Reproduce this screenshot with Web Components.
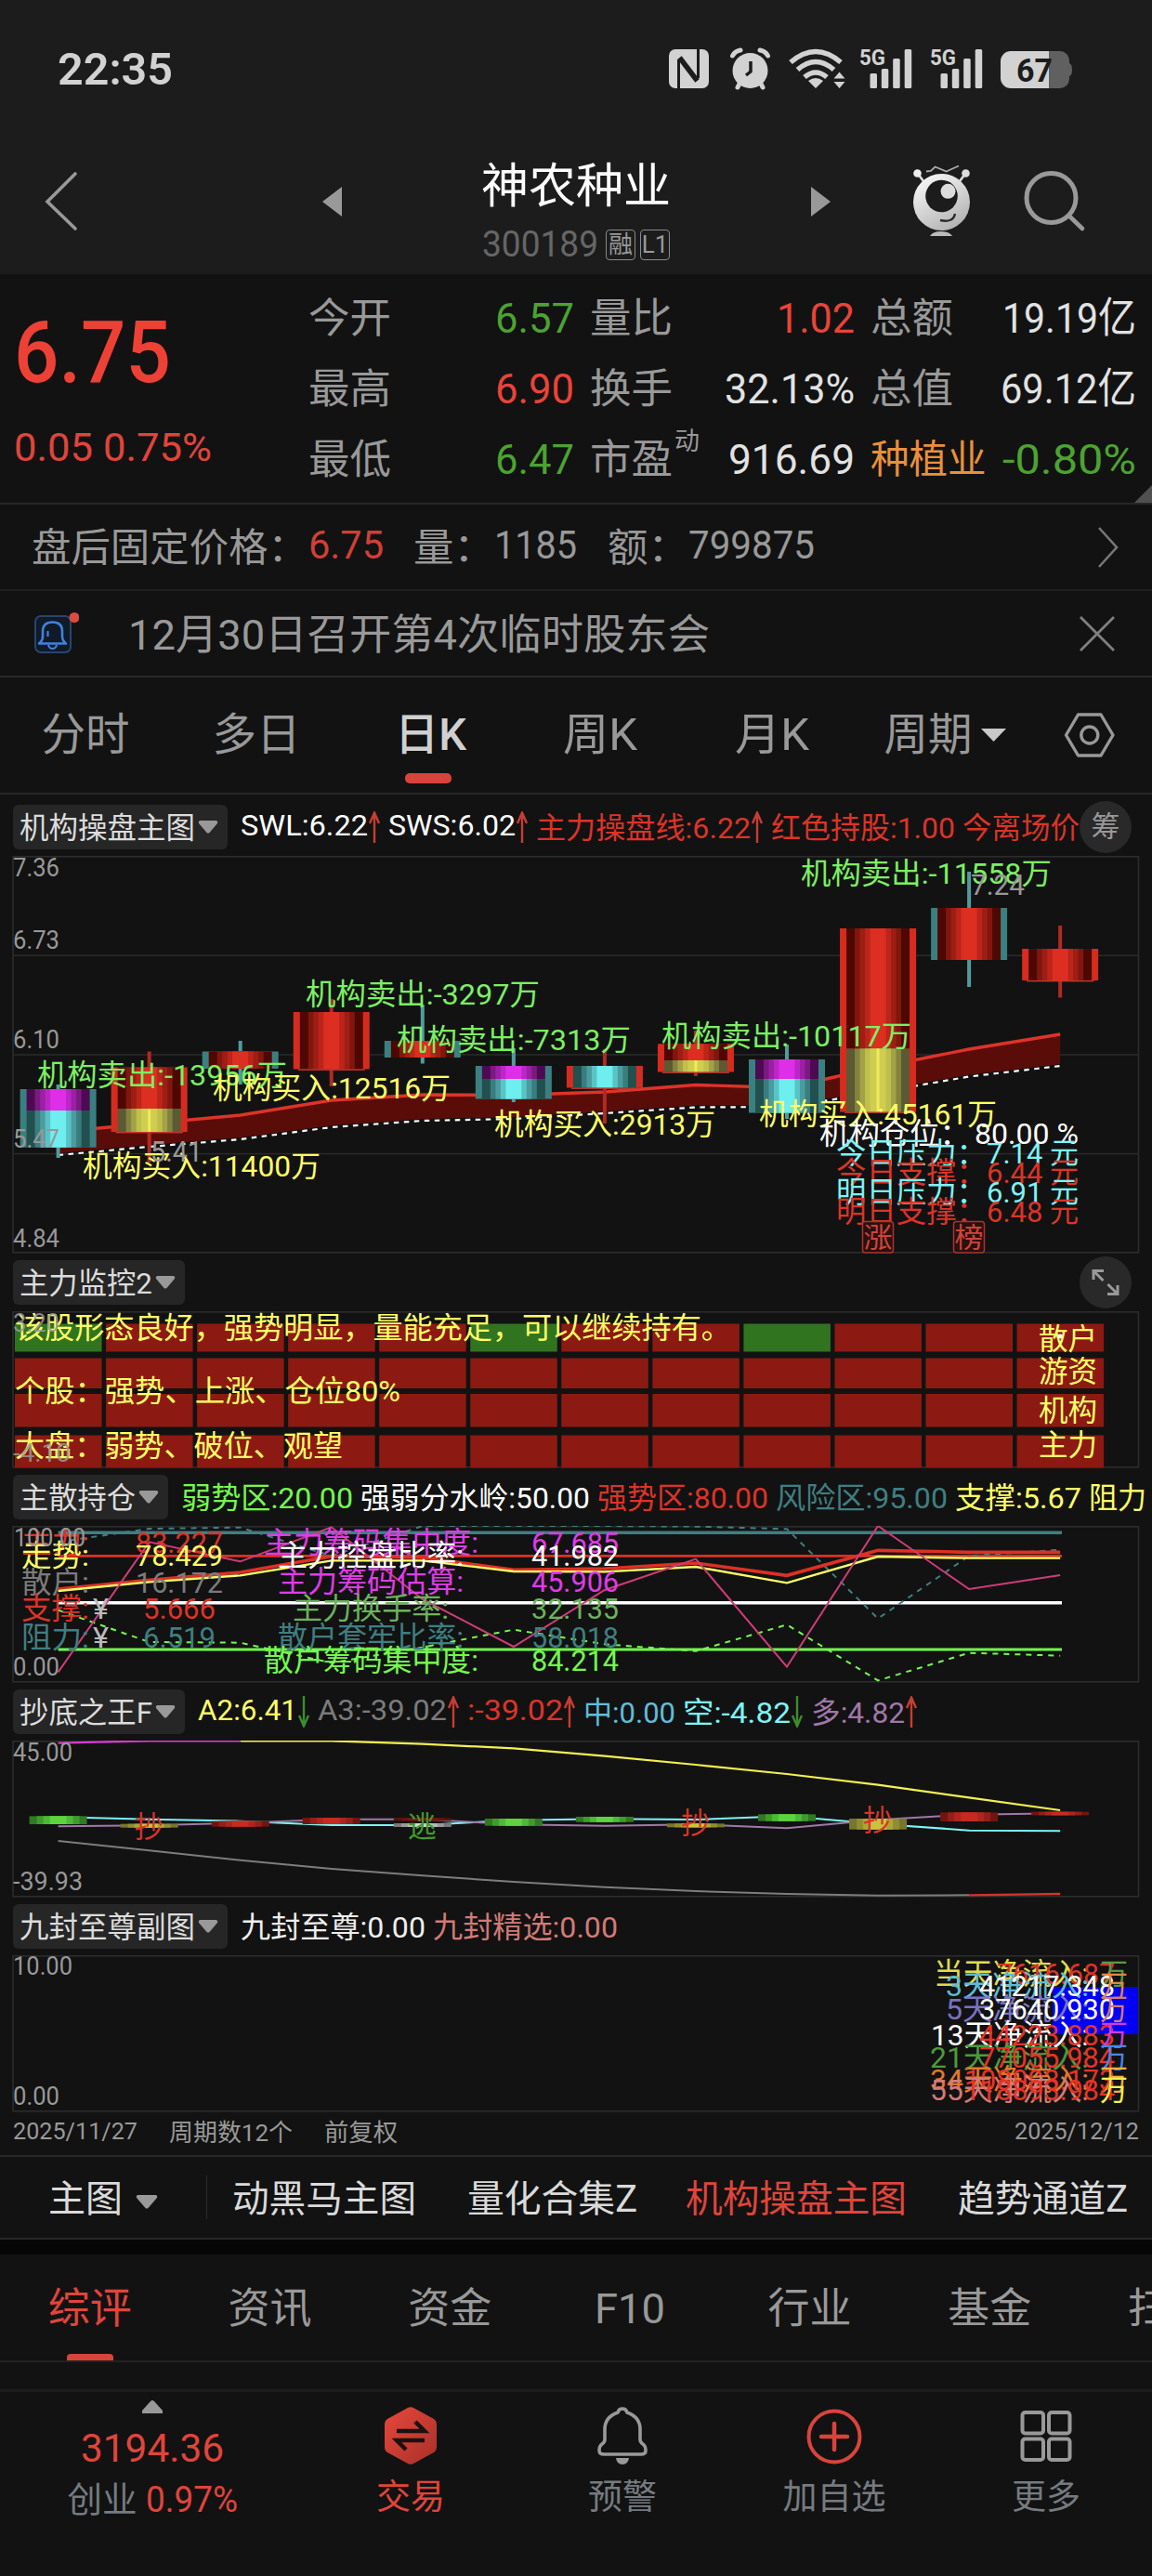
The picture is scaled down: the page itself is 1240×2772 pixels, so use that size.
<!DOCTYPE html>
<html lang="zh-CN">
<head>
<meta charset="utf-8">
<title>神农种业 300189</title>
<style>
body {
    margin: 0;
    width: 1240px;
    height: 2772px;
    overflow: hidden;
    background: #121212;
    color: #999;
    font-family: Roboto, "Noto Sans CJK SC", sans-serif;
    --red: #e0453a;
    --green: #4ca32f;
    --line: #272727;
}
</style>
</head>
<body>
<stock-page></stock-page>

<script>
const define = (name, html) => {
    customElements.define(name, class extends HTMLElement {
        constructor() {
            super()
            const shadow = this.attachShadow({ mode: 'open' })
            shadow.innerHTML = typeof html === 'function' ? html(this) : html
        }
    })
}

const step = 98.05
const cx = i => 62.6 + step * i
const range = n => [...Array(n).keys()]

// svg helpers shared by the charts
const txt = (x, y, s, color, w, size = 32) =>
    `<text x="${x - 1}" y="${y}" fill="${color}" font-size="${size}" textLength="${w + 2}" lengthAdjust="spacingAndGlyphs" xml:space="preserve">${s}</text>`
const rect = (x, y, w, h, fill) => `<rect x="${x}" y="${y}" width="${w}" height="${h}" fill="${fill}"/>`
const poly = (ys, color, width, extra = '', from = 0) =>
    `<polyline points="${ys.map((y, i) => cx(i + from) + ',' + y).join(' ')}" fill="none" stroke="${color}" stroke-width="${width}" ${extra}/>`
const frame = (top, height, body) => `
    <style>
    :host { display: block; height: ${height}px; }
    svg { display: block; }
    </style>
    <svg width="1240" height="${height}" viewBox="0 ${top} 1240 ${height}">
        <rect x="14" y="${top + .8}" width="1211.5" height="${height - 2}" fill="none" stroke="#2c2c2c" stroke-width="1.6"/>
        ${body}
    </svg>`

/* ---------- status bar ---------- */

const signal = x => `
    <svg width="58" height="148" viewBox="${x} 0 58 148" fill="#d2d2d2">
        <text x="${x}" y="70" font-size="24" font-weight="700" textLength="28" lengthAdjust="spacingAndGlyphs">5G</text>
        <rect x="${x + 11.5}" y="79" width="7.5" height="16" rx="1.5"/>
        <rect x="${x + 23.8}" y="74" width="7.5" height="21" rx="1.5"/>
        <rect x="${x + 36.2}" y="63" width="7.5" height="32" rx="1.5"/>
        <rect x="${x + 48.7}" y="53" width="7.5" height="42" rx="1.5"/>
    </svg>`

define('status-bar', `
    <style>
    :host { display: flex; align-items: center; gap: 18px; height: 148px; padding: 0 86px 0 62px; box-sizing: border-box; background: #1c1c1c; color: #d2d2d2; }
    fit-text { margin-right: auto; font-size: 48px; font-weight: 600; }
    </style>
    <fit-text w="124">22:35</fit-text>
    <svg width="46" height="148" viewBox="720 0 46 148">
        <rect x="721" y="53" width="43" height="42" rx="7" fill="#d2d2d2"/>
        <path d="M731.500 95V64M752.500 84V53" fill="none" stroke="#1c1c1c" stroke-width="3"/>
        <path d="M732.500 62L751.500 87" stroke="#1c1c1c" stroke-width="5.500"/>
    </svg>
    <svg width="44" height="148" viewBox="784 0 44 148" overflow="visible">
        <g stroke="#d2d2d2" stroke-width="5" stroke-linecap="round" fill="none">
            <path d="M789.500 60Q792 55 798 54M827.500 60Q825 55 819 54M797 90l-2 4M820 90l2 4"/>
        </g>
        <circle cx="808.500" cy="76" r="19" fill="#d2d2d2"/>
        <path d="M809 66V77L804 81" fill="none" stroke="#1c1c1c" stroke-width="3.500"/>
    </svg>
    <svg width="62" height="148" viewBox="846 0 62 148" overflow="visible">
        <g fill="none" stroke="#d2d2d2" stroke-width="5.500">
            <path d="M852 67Q879 44 906 67"/>
            <path d="M859.500 75Q879 58 898.500 75"/>
            <path d="M867 83Q879 73 891 83"/>
        </g>
        <path d="M871 87Q879 81 887 87L879 95z" fill="#d2d2d2"/>
        <path d="M898.500 84.500l6-7 6 7zM898.500 88l6 7 6-7z" fill="#d2d2d2"/>
    </svg>
    ${signal(926)}
    ${signal(1001)}
    <svg width="77" height="148" viewBox="1077 0 77 148">
        <path d="M1129 55h12a10 10 0 0 1 10 10v3q3 1 3 7t-3 7v3a10 10 0 0 1-10 10h-12z" fill="#606060"/>
        <path d="M1129 55h-41a11 11 0 0 0-11 11v18a11 11 0 0 0 11 11h41z" fill="#d2d2d2"/>
        <text x="1094" y="87.500" font-size="35" font-weight="700" fill="#1c1c1c" textLength="39" lengthAdjust="spacingAndGlyphs">67</text>
    </svg>`)

/* ---------- title bar ---------- */

define('title-bar', `
    <style>
    :host { display: grid; grid-template-columns: 298px 171px 355px 110px 120px 1fr; height: 147px; padding-left: 49px; background: #1c1c1c; }
    svg { display: block; overflow: visible; }
    .title { width: 204px; padding-top: 25px; }
    .name { display: block; color: #fff; font-size: 51px; line-height: 56px; }
    .code { display: flex; align-items: center; gap: 5px; margin-top: 17px; height: 34px; color: #666; font-size: 39px; }
    .code fit-text { margin: 0 3px 0 1px; }
    .tag { flex: none; width: 30px; height: 31px; border: 1.5px solid #8a8a8a; border-radius: 4px; color: #999; font-size: 26px; line-height: 31px; text-align: center; }
    </style>
    <svg width="40" height="147" viewBox="49 148 40 147"><path d="M81 187L51 217L81 246" fill="none" stroke="#999" stroke-width="3.600" stroke-linecap="round"/></svg>
    <svg width="22" height="147" viewBox="347 148 22 147"><path d="M347 217L368 201V233z" fill="#999"/></svg>
    <div class="title">
        <fit-text class="name" w="204">神农种业</fit-text>
        <div class="code"><fit-text w="125">300189</fit-text><div class="tag">融</div><div class="tag">L1</div></div>
    </div>
    <svg width="22" height="147" viewBox="873 148 22 147"><path d="M894 217L873 201V233z" fill="#999"/></svg>
    <svg width="64" height="147" viewBox="983 148 64 147">
        <defs><linearGradient id="g" x1="0" y1="0" x2="0.600" y2="1"><stop offset="0" stop-color="#fff"/><stop offset="1" stop-color="#b5b5b5"/></linearGradient></defs>
        <path d="M988 187l6 8M1039 187l-6 8" stroke="#ddd" stroke-width="2.600"/>
        <path d="M997 184.500l5-.5 4.500-4.500 12 5 13.500-6" fill="none" stroke="#aaa" stroke-width="1.800"/>
        <circle cx="987.500" cy="186.500" r="4.300" fill="#eee"/><circle cx="1039.500" cy="186.500" r="4.300" fill="#ddd"/>
        <circle cx="1013.500" cy="217.500" r="30.500" fill="url(#g)"/>
        <circle cx="1013.500" cy="211" r="17.300" fill="#1c1c1c"/>
        <circle cx="1020.500" cy="205.800" r="8" fill="#dcdcdc"/>
        <path d="M1012 237Q1026 240 1028 230" fill="none" stroke="#2a2a2a" stroke-width="2.400"/>
        <path d="M1001 254q3-5 12-5t12 5z" fill="#bbb"/>
    </svg>
    <svg width="66" height="147" viewBox="1103 148 66 147">
        <circle cx="1131.500" cy="213" r="26.500" fill="none" stroke="#999" stroke-width="5"/>
        <path d="M1151 232.500L1165 246" stroke="#999" stroke-width="4.600" stroke-linecap="round"/>
    </svg>`)

/* ---------- quote ---------- */

const quotes = [
    ['今开', '6.57', 85, 'g'], ['量比', '1.02', 84, 'r'], ['总额', '19.19亿', 144, 'w'],
    ['最高', '6.90', 85, 'r'], ['换手', '32.13%', 140, 'w'], ['总值', '69.12亿', 146, 'w'],
    ['最低', '6.47', 85, 'g'], ['市盈<sup>动</sup>', '916.69', 136, 'w'], ['<i>种植业</i>', '-0.80%', 144, 'g']
]

define('quote-board', `
    <style>
    :host { display: flex; position: relative; height: 246px; border-bottom: 2px solid var(--line); }
    .last { width: 332px; padding: 38px 0 0 15px; box-sizing: border-box; color: #ee4136; }
    .price { height: 93px; font-size: 93px; font-weight: 500; line-height: 93px; }
    .change { margin-top: 33px; color: var(--red); font-size: 43px; line-height: 44px; }
    .grid { display: grid; grid-template-columns: 286px 285px 286px; grid-template-rows: repeat(3, 76px); column-gap: 17px; padding-top: 10px; }
    .cell { display: flex; justify-content: space-between; align-items: center; position: relative; font-size: 44.5px; }
    .cell > span { line-height: 60px; margin-top: -1px; }
    .cell fit-text { font-size: 45px; line-height: 60px; }
    sup { position: absolute; left: 91px; top: 5px; font-size: 27px; line-height: 27px; }
    i { font-style: normal; font-size: 41.500px; color: #e8913a; }
    .r { color: #ea4438; } .g { color: var(--green); } .w { color: #e2e2e2; }
    .corner { position: absolute; right: 0; bottom: 0; }
    </style>
    <div class="last">
        <div class="price"><fit-text w="169">6.75</fit-text></div>
        <div class="change"><fit-text w="213">0.05 0.75%</fit-text></div>
    </div>
    <div class="grid">
        ${quotes.map(([k, v, w, c]) => `<div class="cell"><span>${k}</span><fit-text class="${c}" w="${w}">${v}</fit-text></div>`).join('')}
    </div>
    <svg class="corner" width="19" height="19"><path d="M19 0V19H0z" fill="#505050"/></svg>`)

define('after-hours', `
    <style>
    :host { display: flex; align-items: center; height: 91px; padding: 0 35px 0 34px; border-bottom: 2px solid #202020; font-size: 41.800px; }
    fit-text { padding-bottom: 5px; }
    .r { color: #cf4036; margin: 0 32px 0 1px; }
    .n { margin-right: 33px; }
    svg { margin-left: auto; }
    </style>
    <fit-text w="297">盘后固定价格：</fit-text><fit-text class="r" w="81">6.75</fit-text>
    <fit-text w="87">量：</fit-text><fit-text class="n" w="89">1185</fit-text>
    <fit-text w="87">额：</fit-text><fit-text w="136">799875</fit-text>
    <svg width="24" height="46"><path d="M2 2L21 23L2 44" fill="none" stroke="#777" stroke-width="2.600"/></svg>`)

define('notice-bar', `
    <style>
    :host { display: flex; align-items: center; height: 91px; padding: 0 39px 0 36px; border-bottom: 2px solid var(--line); }
    fit-text { margin: 0 auto 0 53px; padding-bottom: 5px; font-size: 45px; }
    </style>
    <svg width="49" height="54" viewBox="36 653 49 54">
        <rect x="38" y="661" width="38" height="39" rx="6" fill="#101a28" stroke="#27456e" stroke-width="2"/>
        <path d="M42 690.500q4-3 4-8v-5q0-10 10.500-10t10.500 10v5q0 5 4 8z" fill="none" stroke="#3f83dc" stroke-width="2.600" stroke-linejoin="round"/>
        <path d="M51.500 677v6M52 692q1 4 4.500 4t4.500-4" fill="none" stroke="#3f83dc" stroke-width="2.200"/>
        <circle cx="80" cy="662.500" r="5.500" fill="#dc4a40"/>
    </svg>
    <fit-text w="626">12月30日召开第4次临时股东会</fit-text>
    <svg width="40" height="40"><path d="M2 2L38 38M38 2L2 38" stroke="#808080" stroke-width="2.800"/></svg>`)

define('period-tabs', `
    <style>
    :host { display: grid; grid-template-columns: 184px 184px 190px 175px 196px 176px 135px; grid-template-rows: 124px; height: 124px; margin-bottom: 4px; border-bottom: 2px solid var(--line); font-size: 47.500px; line-height: 124px; text-align: center; }
    .on { position: relative; color: #d0d0d0; font-weight: 500; }
    .on::after { content: ""; position: absolute; left: 50%; bottom: 10px; width: 50px; height: 11px; margin-left: -27px; border-radius: 5px; background: #d8443b; }
    .more { display: flex; align-items: center; justify-content: center; gap: 9px; }
    svg { align-self: center; justify-self: center; }
    </style>
    <div>分时</div><div>多日</div><div class="on"><fit-text w="77">日K</fit-text></div>
    <div><fit-text w="80">周K</fit-text></div><div><fit-text w="80">月K</fit-text></div>
    <div class="more">周期<svg width="27" height="14"><path d="M0 0H27L13.500 14z" fill="#c9c9c9"/></svg></div>
    <svg width="56" height="52"><path d="M15.500 4H40L53 26L40 48H15.500L2.500 26z" fill="none" stroke="#999" stroke-width="3.400" stroke-linejoin="round"/><circle cx="27.800" cy="26" r="9" fill="none" stroke="#999" stroke-width="3.400"/></svg>`)

/* ---------- indicator panel ---------- */

define('indicator-panel', el => `
    <style>
    :host { display: block; }
    header { display: flex; align-items: center; gap: 8px; position: relative; height: 62px; padding-left: 14px; overflow: hidden; font-size: 32px; }
    .chip { display: flex; align-items: center; gap: 2px; height: 48px; margin-right: 6px; padding: 0 10px 0 8px; border-radius: 6px; background: #262626; color: #dcdcdc; flex: none; }
    .chip fit-text { margin-left: -1px; margin-right: 1px; padding-bottom: 4px; }
    ::slotted(fit-text) { padding-bottom: 4px; }
    </style>
    <header>
        <div class="chip"><fit-text w="${el.getAttribute('w')}">${el.getAttribute('name')}</fit-text>
            <svg width="22" height="14"><path d="M2 0H20Q22 1 21 3L12.500 13Q11 14 9.500 13L1 3Q0 1 2 0z" fill="#999"/></svg></div>
        <slot name="legend"></slot>
    </header>
    <slot></slot>`)

define('trend-arrow', el => {
    const up = el.hasAttribute('up')
    return `
    <style>:host { display: block; flex: none; width: 14px; height: 34px; margin-left: -8px; }</style>
    <svg width="14" height="34" style="display:block;transform:${up ? 'none' : 'rotate(180deg)'}">
        <path d="M7 34V2M2 13L7 1.500L12 13" fill="none" stroke="${up ? '#c73d33' : '#3d8c2e'}" stroke-width="2.400"/>
    </svg>`
})

define('round-button', `
    <style>
    :host { position: absolute; right: 22px; top: 3px; display: flex; align-items: center; justify-content: center; width: 56px; height: 56px; border-radius: 50%; background: #292929; color: #999; font-size: 31px; line-height: 48px; }
    </style><slot></slot>`)

/* ---------- main chart ---------- */

const tones = {
    red: ['#4e0802', '#80170e', '#9e1e14', '#bb251a', '#dd2e22'],
    yellow: ['#5b5a33', '#83823f', '#a3a247', '#bfbf4b', '#cfce50'],
    cyan: ['#22504f', '#3a7d7e', '#4a9c9e', '#5ac3c5', '#6eeeee'],
    magenta: ['#4d0a52', '#7a1a80', '#9c1fa5', '#bb27c4', '#de2ee8']
}
// up, top, bottom, high, low, upper tone, lower tone, split
const candles = [
    [0, 1171, 1233.7, 1166, 1245, 'magenta', 'cyan', 1194],
    [1, 1147.5, 1217, 1130.5, 1250, 'red', 'yellow', 1192],
    [0, 1130.5, 1149, 1119, 1166, 'red'],
    [1, 1088, 1149.5, 1074, 1168, 'red'],
    [0, 1119, 1137, 1080, 1143.5, 'red'],
    [0, 1146, 1181.5, 1127, 1185, 'magenta', 'cyan', 1160],
    [1, 1146, 1169.5, 1128, 1208, 'cyan'],
    [1, 1122.3, 1152.5, 1108, 1157, 'red', 'yellow', 1140],
    [0, 1139, 1196.5, 1123, 1203, 'magenta', 'cyan', 1160],
    [1, 998, 1195.5, 998, 1195, 'red', 'yellow', 1127.5],
    [0, 976, 1032, 937, 1061, 'red'],
    [1, 1020, 1054, 995, 1072.5, 'red']
]
const shade = (x, y1, y2, tone) =>
    [34, 25, 19.5, 14, 8.5].map((r, k) => rect(x - r, y1, r * 2, y2 - y1, tones[tone][k])).join('')
const candle = ([up, top, bottom, high, low, t1, t2, split], i) => {
    const x = cx(i)
    let s = rect(x - 2, high, 4, low - high, up ? '#b02a22' : '#4f9c9c')
    s += rect(x - 41, top, 82, bottom - top, up ? '#d62c20' : '#3b8080')
    s += shade(x, top, split || bottom, t1)
    if (t2) s += shade(x, split, bottom, t2)
    if (t2 === 'yellow') s += rect(x - 1.5, split, 3, bottom - split, '#eeec5a')
    if (up) s += rect(x - 36, bottom, 72, 1.4, '#c0382e')
    return s
}
const upper = [1217, 1208, 1199, 1183, 1177, 1177.5, 1174, 1166.5, 1169.5, 1147.5, 1128, 1112]
const lower = [1242, 1233, 1225, 1212, 1205, 1203, 1197, 1190.5, 1190, 1174.5, 1157.5, 1146]
const G = '#7cf062', Y = '#ffff66', C = '#7df4f7', R = '#dc3427', W = '#fff', A = '#989898', T = '#3f7f81'

define('main-chart', frame(920, 428, `
    ${[1027.3, 1134, 1240.6].map(y => rect(14, y - .8, 1212, 1.6, '#2a2a2a')).join('')}
    <polygon fill="#5a0d08" points="${upper.map((y, i) => cx(i) + ',' + y).join(' ')} ${lower.map((y, i) => cx(i) + ',' + (y - 2)).reverse().join(' ')}"/>
    ${poly(lower, '#fff', 2.2, 'stroke-dasharray="5.5 5.5"')}
    ${poly(upper, '#dd3428', 3.4)}
    ${candles.map(candle).join('')}
    ${txt(863, 950, '机构卖出:-11558万', G, 268)}
    ${txt(330, 1080, '机构卖出:-3297万', G, 250)}
    ${txt(428, 1128.5, '机构卖出:-7313万', G, 250)}
    ${txt(41, 1166.5, '机构卖出:-13956万', G, 267)}
    ${txt(713, 1125, '机构卖出:-10117万', G, 267)}
    ${txt(230, 1180.5, '机构买入:12516万', Y, 254)}
    ${txt(90, 1265, '机构买入:11400万', Y, 254)}
    ${txt(533, 1220, '机构买入:2913万', Y, 236)}
    ${txt(818, 1208.5, '机构买入:45161万', Y, 254)}
    ${txt(163, 1249, '5.41', A, 54)}
    ${txt(1046, 962, '7.24', A, 56)}
    ${txt(883, 1230, '机构仓位：', W, 160)}${txt(1050, 1230, '80.00 %', W, 110)}
    ${txt(901, 1251, '今日压力：', C, 160)}${txt(1063, 1251, '7.14 元', C, 97)}
    ${txt(901, 1271.7, '今日支撑：', R, 160)}${txt(1063, 1271.7, '6.44 元', R, 97)}
    ${txt(901, 1293, '明日压力：', C, 160)}${txt(1063, 1293, '6.91 元', C, 97)}
    ${txt(901, 1313.5, '明日支撑：', R, 160)}${txt(1063, 1313.5, '6.48 元', R, 97)}
    ${[['涨', 928.5], ['榜', 1026.5]].map(([s, x]) => `<rect x="${x}" y="1313.5" width="33" height="33.5" rx="3" fill="#2a100e" stroke="#a5352d" stroke-width="1.5"/>` + txt(x + 2, 1341, s, '#cf443a', 29, 30)).join('')}
    ${[['7.36', 942], ['6.73', 1020], ['6.10', 1127], ['5.47', 1234], ['4.84', 1341]].map(([s, y]) => txt(15, y, s, A, 48, 27)).join('')}
`))

/* ---------- sub charts ---------- */

const rows = [[1423.5, 30], [1460.5, 32.5], [1499, 35.5], [1543.5, 35]]

define('monitor-chart', frame(1410, 169, `
    ${rows.map(([y, h], r) => range(12).map(i =>
        rect(16 + 98.05 * i, y, 93.5, h, r === 0 && [0, 5, 8].includes(i) ? '#317420' : '#8c1a12')).join('')).join('')}
    ${txt(17, 1439, '该股形态良好，强势明显，量能充足，可以继续持有。', Y, 769)}
    ${txt(17, 1506.5, '个股：强势、上涨、仓位80%', Y, 413)}
    ${txt(17, 1566, '大盘：弱势、破位、观望', Y, 351)}
    ${[['散户', 1451], ['游资', 1486], ['机构', 1527.5], ['主力', 1565]].map(([s, y]) => txt(1119, y, s, Y, 61)).join('')}
    <circle cx="1141" cy="1437" r="2.500" fill="#fff"/>
    <g opacity=".85">${txt(15, 1432, '3.20', A, 48, 27)}${txt(15, 1571.5, '-4.10', A, 60, 27)}</g>
`))

// line values are thirds of a pixel below the base
const at = (base, ys) => ys.map(y => base + y / 3)
const level = (y, color, w) => `<path d="M62.600 ${y}H1143" stroke="${color}" stroke-width="${w}"/>`
const M = '#e03be8', G2 = '#74f94e'
const holdings = [
    [1669.5, '主力:', R, '83.227', 147], [1683.5, '走势:', Y, '78.429', 147], [1712.5, '散户:', '#7b7b7b', '16.172', 147],
    [1740.7, '支撑:', R, '5.666', 155], [1772.3, '阻力:', T, '6.519', 155]
]
const ratios = [
    [1669.5, '主力筹码集中度:', M, 285, 229, '67.685'], [1683.5, '主力控盘比率:', W, 300, 198, '41.982'],
    [1712, '主力筹码估算:', M, 300, 198, '45.906'], [1740.7, '主力换手率:', '#6db35c', 316, 166, '32.135'],
    [1772.3, '散户套牢比率:', T, 300, 198, '58.018'], [1796.7, '散户筹码集中度:', G2, 285, 229, '84.214']
]

define('holding-chart', frame(1641, 169, `
    ${level(1648.3, T, 3.4)}${level(1673.3, '#e0301f', 2.8)}${level(1723.7, '#fff', 3.6)}${level(1774, G2, 3)}
    ${poly(at(1345, [940, 897, 893, 985, 888, 888, 888, 890, 898, 1187, 985, 965]), T, 2, 'stroke-dasharray="6 6"')}
    ${poly(at(1345, [1160, 1263, 1265, 1330, 1280, 1223, 1270, 1292, 1207, 1387, 1298, 1307]), G2, 2, 'stroke-dasharray="6 6"')}
    ${poly(at(1345, [1092, 1063, 1038, 986, 990, 1030, 1026, 1008, 1048, 967, 973, 973]), '#dd3024', 3.6)}
    ${poly(at(1345, [1098, 1069, 1048, 1000, 1000, 1035, 1036, 1020, 1072, 987, 992, 992]), Y, 2.4)}
    ${poly(at(1345, [1360, 940, 1003, 892, 1125, 1278, 1095, 995, 1343, 888, 1092, 1047]), '#cf3c78', 2)}
    ${holdings.map(([y, s, c, v, x]) => txt(24, y, s, c, 71) + txt(x, y, v, c, 386 - 2 * x)).join('')}
    ${txt(101, 1740.7, '¥', '#bbb', 15)}${txt(101, 1772.3, '¥', '#bbb', 15)}
    ${ratios.map(([y, s, c, x, w, v]) => txt(x, y, s, c, w) + txt(573, y, v, c, 92)).join('')}
    ${txt(16, 1662.5, '100.00', A, 75, 27)}${txt(15, 1802, '0.00', A, 48, 27)}
`))

const glow = {
    g: ['#2f7a22', '#3f9b2d', '#4db936', '#5fd33f'],
    r: ['#74140f', '#93201a', '#ad2620', '#c62b22'],
    y: ['#77762a', '#8f8e30', '#a9a836', '#c6c33f'],
    w: ['#777', '#999', '#b5b5b5', '#d5d5d5'],
    d: ['#5c0f0b', '#6a130f', '#741511', '#7c1713']
}
const pills = [[0, 'g', 430, 456], [1, 'y', 455, 467], [2, 'r', 446, 464], [3, 'r', 435, 456], [4, 'd', 436, 445], [4, 'w', 453, 465],
    [5, 'g', 438, 461], [6, 'g', 432, 449], [7, 'y', 454, 466], [8, 'g', 424, 446], [9, 'y', 438, 473], [10, 'r', 418, 447], [11, 'r', 416, 427]]

define('bottom-chart', frame(1872, 169, `
    ${poly(at(1810, [187, 187, 197, 211, 236, 264, 294, 329, 370, 411]), '#f3f04e', 2.2, '', 2)}
    ${poly(at(1810, [194, 187, 187]), '#d63bd0', 2.4)}
    ${poly(at(1810, [510, 541, 572, 600, 622, 642, 659, 672, 681, 686, 685]), '#7d7d7d', 2)}
    ${poly(at(1810, [685, 681]), '#d0352a', 2.4, '', 10)}
    ${poly(at(1810, [433, 440, 446, 459, 459, 443, 439, 441, 430, 455, 476, 478]), C, 2)}
    ${poly(at(1810, [463, 460, 452, 440, 440, 457, 461, 457, 469, 442, 425, 421]), '#a078a8', 2)}
    ${pills.map(([i, t, a, b]) => [31, 23, 16, 9].map((r, k) => rect(cx(i) - r, 1810 + a / 3, r * 2, (b - a) / 3, glow[t][k])).join('')).join('')}
    ${[[1, '抄', R, 464], [4, '逃', '#3f9b2d', 466], [7, '抄', R, 452], [9, '抄', R, 443]].map(([i, s, c, y]) => txt(cx(i) - 15, 1821 + y / 3, s, c, 29)).join('')}
    ${txt(15, 1893.5, '45.00', A, 62, 27)}${txt(15, 2033, '-39.93', A, 73, 27)}
`))

const flows = [
    [2134, '当天净流入:', '#dfdc4c', 1006, '7616.687', 1074, R, '#5a9a45'],
    [2147, '3天净流入:', '#5cbcd8', 1019, '41217.348', 1055, W, '#e08a3c'],
    [2171.5, '5天净流入:', '#7a72c0', 1019, '37640.930', 1055, W, '#d27b76'],
    [2199.5, '13天净流入:', W, 1003, '44223.883', 1055, '#e83325', '#d23be0'],
    [2224, '21天净流入:', '#4f9a3a', 1002, '77055.984', 1055, '#e83325', '#4a86e8'],
    [2248, '34天净流入:', '#e0782c', 1002, '108093.173', 1039, '#e83325', '#f0b040'],
    [2258.5, '55天净流入:', '#d27b76', 1002, '118893.984', 1039, '#e83325', '#f3ef4e']
]

define('flow-chart', frame(2103, 169, `
    ${rect(1133, 2137, 92, 51, '#0000f5')}
    ${flows.map(([y, s, c, x, v, vx, vc, uc]) => txt(x, y, s, c, 1171 - x) + txt(vx, y, v, vc, 1199 - vx) + txt(1185, y, '万', uc, 28)).join('')}
    ${txt(15, 2124, '10.00', A, 62, 27)}${txt(15, 2264, '0.00', A, 48, 27)}
`))

const leg = (s, w, c, arrow) => `<fit-text slot="legend" w="${w}" style="color:${c}">${s}</fit-text>` +
    (arrow ? `<trend-arrow slot="legend" ${arrow}></trend-arrow>` : '')

define('chart-stack', `
    <style>
    :host { display: block; }
    footer { display: flex; align-items: center; height: 46px; padding: 0 14px; border-bottom: 2px solid var(--line); font-size: 26.500px; }
    footer fit-text { padding-bottom: 7px; }
    footer fit-text + fit-text { margin-left: 34px; }
    footer fit-text:last-child { margin-left: auto; }
    </style>
    <indicator-panel name="机构操盘主图" w="189">
        ${leg('SWL:6.22', 137, '#fff', 'up')}${leg('SWS:6.02', 137, '#fff', 'up')}
        ${leg('主力操盘线:6.22', 231, R, 'up')}${leg('红色持股:1.00', 198, R)}${leg('今离场价', 126, R)}
        <round-button slot="legend">筹</round-button>
        <main-chart></main-chart>
    </indicator-panel>
    <indicator-panel name="主力监控2" w="143">
        <round-button slot="legend"><svg width="30" height="30" viewBox="0 0 30 30"><g fill="none" stroke="#999" stroke-width="3"><path d="M2 12V2.500H13M2 2.500L12.500 13M28 18V27.500H17M28 27.500L17.500 17"/></g></svg></round-button>
        <monitor-chart></monitor-chart>
    </indicator-panel>
    <indicator-panel name="主散持仓" w="125">
        ${leg('弱势区:20.00', 185, G2)}${leg('强弱分水岭:50.00', 247, W)}${leg('强势区:80.00', 184, R)}
        ${leg('风险区:95.00', 185, T)}${leg('支撑:5.67', 136, Y)}${leg('阻力', 62, Y)}
        <holding-chart></holding-chart>
    </indicator-panel>
    <indicator-panel name="抄底之王F" w="143">
        ${leg('A2:6.41', 107, Y, 'down')}${leg('A3:-39.02', 139, '#7b7b7b', 'up')}${leg(':-39.02', 103, R, 'up')}
        ${leg('中:0.00', 99, '#5fbedb')}${leg('空:-4.82', 116, C, 'down')}${leg('多:4.82', 101, '#a078a8', 'up')}
        <bottom-chart></bottom-chart>
    </indicator-panel>
    <indicator-panel name="九封至尊副图" w="189">
        ${leg('九封至尊:0.00', 199, '#eee')}${leg('九封精选:0.00', 199, '#d27b76')}
        <flow-chart></flow-chart>
    </indicator-panel>
    <footer>
        <fit-text w="134">2025/11/27</fit-text><fit-text w="133">周期数12个</fit-text><fit-text w="79">前复权</fit-text><fit-text w="134">2025/12/12</fit-text>
    </footer>`)

/* ---------- lower bars ---------- */

define('formula-bar', `
    <style>
    :host { display: flex; align-items: center; height: 87px; padding-left: 52px; border-bottom: 2px solid var(--line); color: #dadada; font-size: 40px; }
    .pick { display: flex; align-items: center; gap: 14px; width: 170px; height: 47px; border-right: 1.500px solid #2c2c2c; margin-right: 27px; }
    .pick svg { margin-top: 10px; }
    .pick span, fit-text { padding-bottom: 3px; }
    fit-text { margin-right: 55px; }
    .on { color: var(--red); }
    </style>
    <div class="pick"><span>主图</span><svg width="24" height="15"><path d="M2 0H22Q24 1 23 3L13.500 14Q12 15 10.500 14L1 3Q0 1 2 0z" fill="#999"/></svg></div>
    <fit-text w="198">动黑马主图</fit-text><fit-text w="183" style="margin-right:52px">量化合集Z</fit-text><fit-text class="on" w="238">机构操盘主图</fit-text><fit-text w="183" style="margin:0">趋势通道Z</fit-text>`)

define('section-tabs', `
    <style>
    :host { display: flex; height: 114px; border-top: 16px solid #060606; border-bottom: 2px solid #222; font-size: 45px; line-height: 118px; overflow: hidden; }
    div { flex: 0 0 193.700px; text-align: center; }
    .on { position: relative; color: var(--red); }
    .on::after { content: ""; position: absolute; left: 72px; bottom: 0; width: 50px; height: 7px; border-radius: 4px 4px 0 0; background: #d8443b; }
    </style>
    <div class="on">综评</div><div>资讯</div><div>资金</div><div><fit-text w="76">F10</fit-text></div><div>行业</div><div>基金</div><div>扫雷</div>`)

define('nav-item', `
    <style>
    :host { display: flex; flex-direction: column; align-items: center; width: 228px; padding-top: 14px; color: #757b80; font-size: 37px; }
    .icon { height: 69px; }
    .label { line-height: 37px; margin-top: 12px; }
    </style>
    <div class="icon"><slot name="icon"></slot></div><div class="label"><slot></slot></div>`)

define('bottom-bar', `
    <style>
    :host { display: flex; height: 199px; margin-top: 29px; border-top: 3px solid #1d1d1d; }
    .index { display: flex; flex-direction: column; align-items: center; width: 328px; padding-top: 9px; box-sizing: border-box; color: var(--red); font-size: 43px; }
    .index > fit-text { margin-top: 15px; line-height: 44px; }
    .sub { display: flex; gap: 9px; margin-top: 12px; font-size: 39px; line-height: 44px; }
    .sub span { color: #757b80; font-size: 37.500px; }
    .on { color: var(--red); }
    </style>
    <div class="index">
        <svg width="22" height="14"><path d="M11 0Q12 0 13 1L22 11V14H0V11L9 1Q10 0 11 0z" fill="#999"/></svg>
        <fit-text w="154">3194.36</fit-text>
        <div class="sub"><span>创业</span><fit-text w="99">0.97%</fit-text></div>
    </div>
    <nav-item class="on">
        <svg slot="icon" width="60" height="66" viewBox="0 0 60 66">
            <defs><linearGradient id="h" x1="0" y1="0" x2="1" y2="1"><stop offset="0" stop-color="#e8483c"/><stop offset="1" stop-color="#a83028"/></linearGradient></defs>
            <path d="M26 3.500Q30 1 34 3.500L55 15Q58 17 58 21V45Q58 49 55 51L34 62.500Q30 65 26 62.500L5 51Q2 49 2 45V21Q2 17 5 15z" fill="url(#h)"/>
            <path d="M15 28H45L35 18M45 38H15L25 48" fill="none" stroke="#1a1212" stroke-width="4.500"/>
        </svg>交易</nav-item>
    <nav-item>
        <svg slot="icon" width="60" height="66" viewBox="0 0 60 66">
            <path d="M30 4q4 0 5 4q14 5 14 18v11q0 3 3 5t3 7q0 4-5 4H10q-5 0-5-4q0-5 3-7t3-5V26q0-13 14-18q1-4 5-4z" fill="none" stroke="#999" stroke-width="3.600"/>
            <path d="M23 57h14q-1 7-7 7t-7-7z" fill="#999"/>
        </svg>预警</nav-item>
    <nav-item>
        <svg slot="icon" width="60" height="66" viewBox="0 0 60 66">
            <circle cx="30" cy="34" r="27.500" fill="none" stroke="#d9443b" stroke-width="4"/>
            <path d="M30 20V48M16 34H44" stroke="#d9443b" stroke-width="4.500" stroke-linecap="round"/>
        </svg>加自选</nav-item>
    <nav-item>
        <svg slot="icon" width="60" height="66" viewBox="0 0 60 66"><g fill="none" stroke="#999" stroke-width="4">
            <rect x="4.500" y="8" width="22.500" height="22.500" rx="3"/><rect x="33" y="8" width="22.500" height="22.500" rx="3"/>
            <rect x="4.500" y="36.500" width="22.500" height="22.500" rx="3"/><rect x="33" y="36.500" width="22.500" height="22.500" rx="3"/>
        </g></svg>更多</nav-item>`)

define('stock-page', `
    <style>:host { display: flex; flex-direction: column; }</style>
    <status-bar></status-bar>
    <title-bar></title-bar>
    <quote-board></quote-board>
    <after-hours></after-hours>
    <notice-bar></notice-bar>
    <period-tabs></period-tabs>
    <chart-stack></chart-stack>
    <formula-bar></formula-bar>
    <section-tabs></section-tabs>
    <bottom-bar></bottom-bar>`)

// Squeezes its text to a given width, defined last so the rest is laid out when it measures
customElements.define('fit-text', class extends HTMLElement {
    constructor() {
        super()
        this.attachShadow({ mode: 'open' }).innerHTML =
            '<style>:host { display: inline-block; flex: none; white-space: nowrap; text-align: left; } span { display: inline-block; transform-origin: 0 50%; }</style>' +
            '<span><slot></slot></span>'
    }

    connectedCallback() {
        const span = this.shadowRoot.querySelector('span')
        const w = Number(this.getAttribute('w'))
        const natural = span.getBoundingClientRect().width
        this.style.width = w + 'px'
        if (natural) span.style.transform = `scaleX(${w / natural})`
    }
})
</script>
</body>
</html>
